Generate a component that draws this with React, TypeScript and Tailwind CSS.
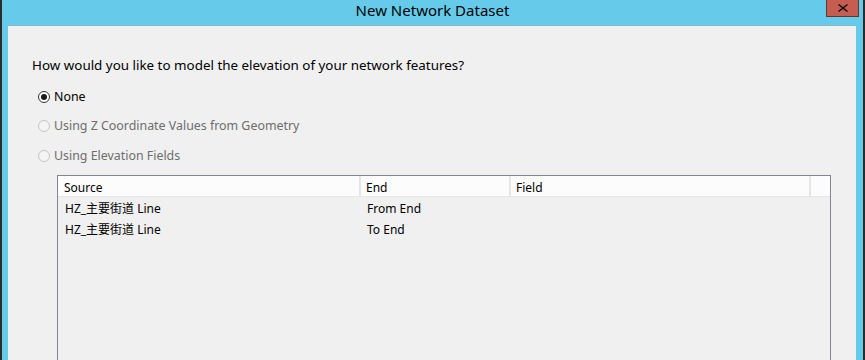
export default function App() {
  const font = { fontFamily: '"Noto Sans", "Noto Sans CJK SC", sans-serif' };
  const rows = [
    { source: "HZ_主要街道 Line", end: "From End", field: "" },
    { source: "HZ_主要街道 Line", end: "To End", field: "" },
  ];

  return (
    <div
      className="w-[865px] h-[360px] overflow-hidden bg-[#66cbea] border-l-2 border-r-2 border-[#2b2b2b] flex flex-col"
      style={font}
    >
      {/* Title bar */}
      <div className="relative h-[25px] shrink-0 flex justify-center pt-[2px]">
        <span className="text-[15px] text-black leading-[17px]">New Network Dataset</span>
        <button className="absolute right-[4px] top-0 w-[33px] h-[17px] bg-[#c75c50] border border-[#5a3a36] border-t-0 flex items-center justify-center">
          <svg width="10" height="8" viewBox="0 0 10 8">
            <path d="M1 0 L5 3 L9 0 L10 1 L6 4 L10 7 L9 8 L5 5 L1 8 L0 7 L4 4 L0 1 Z" fill="#111" />
          </svg>
        </button>
      </div>

      {/* Content */}
      <div className="flex-1 ml-[6px] mr-[7px] bg-[#f0f0f0] border-t border-[#8cb4c6] pl-[24px] pt-[31px]">
        <p className="text-[13.4px] leading-[16px] text-black">
          How would you like to model the elevation of your network features?
        </p>

        <div className="mt-[16px] flex flex-col">
          <label className="flex items-center gap-[4px] h-[16px] pl-[6px]">
            <span className="w-[12px] h-[12px] rounded-full border border-[#333] bg-white flex items-center justify-center">
              <span className="w-[6px] h-[6px] rounded-full bg-[#1a1a1a]" />
            </span>
            <span className="text-[12.4px] text-black">None</span>
          </label>
          <label className="mt-[13px] flex items-center gap-[4px] h-[16px] pl-[6px]">
            <span className="w-[12px] h-[12px] rounded-full border border-[#c4c4c4] bg-[#f4f4f4]" />
            <span className="text-[12.4px] text-[#6d6d6d]">Using Z Coordinate Values from Geometry</span>
          </label>
          <label className="mt-[14px] flex items-center gap-[4px] h-[16px] pl-[6px]">
            <span className="w-[12px] h-[12px] rounded-full border border-[#c4c4c4] bg-[#f4f4f4]" />
            <span className="text-[12.4px] text-[#6d6d6d]">Using Elevation Fields</span>
          </label>
        </div>

        {/* Table */}
        <div className="mt-[11px] ml-[25px] w-[774px] h-[300px] border border-[#828790] bg-[#f0f0f0]">
          <div className="flex h-[21px] bg-[#fcfcfc] border-b border-[#e5e5e5] text-[12px] leading-[16px] text-black">
            <div className="w-[303px] border-r-2 border-[#e5e5e5] pl-[6px] pt-[4px]">Source</div>
            <div className="w-[150px] border-r-2 border-[#e5e5e5] pl-[5px] pt-[4px]">End</div>
            <div className="w-[300px] border-r-2 border-[#e5e5e5] pl-[5px] pt-[4px]">Field</div>
            <div className="flex-1" />
          </div>
          {rows.map((r, i) => (
            <div key={i} className="flex h-[21px] text-[12px] leading-[16px] text-black pt-[4px]">
              <div className="w-[303px] pl-[7px]">{r.source}</div>
              <div className="w-[150px] pl-[6px]">{r.end}</div>
              <div className="w-[300px] pl-[6px]">{r.field}</div>
            </div>
          ))}
        </div>
      </div>
    </div>
  );
}
